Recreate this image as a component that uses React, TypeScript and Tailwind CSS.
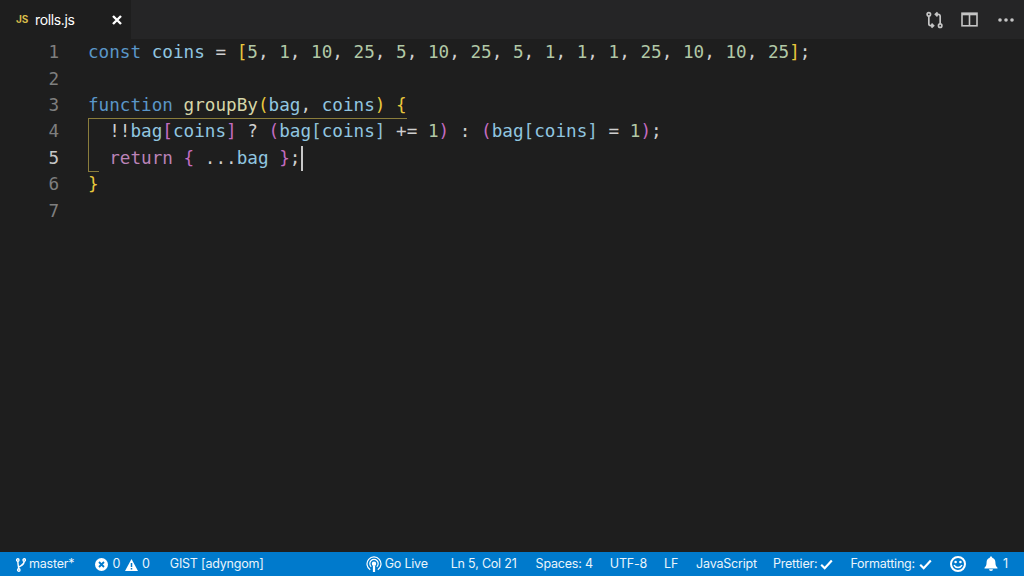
import React from "react";

const B = "text-[#91c6e0]";
const K = "text-[#5a96c8]";
const N = "text-[#b1c8a6]";
const Y = "text-[#e8c83c]";
const P = "text-[#c46cc0]";
const C = "text-[#bb83b8]";
const F = "text-[#d6d6a8]";
const D = "text-[#cfcfcf]";
const G = "text-[#8fc0d8]";

function S({ c, children }: { c: string; children: React.ReactNode }) {
  return <span className={c}>{children}</span>;
}

const nums = [5, 1, 10, 25, 5, 10, 25, 5, 1, 1, 1, 25, 10, 10, 25];

function Line({ n, active, children }: { n: number; active?: boolean; children?: React.ReactNode }) {
  return (
    <div className="flex h-[26.4px] leading-[26.4px]">
      <div className={`w-[59px] shrink-0 text-right ${active ? "text-[#c6c6c6]" : "text-[#7f7f7f]"}`}>{n}</div>
      <div className="ml-[29px] whitespace-pre text-[#cfcfcf]">{children}</div>
    </div>
  );
}

function Check() {
  return (
    <svg width="13" height="11" viewBox="0 0 13 11" fill="none" stroke="#fff" strokeWidth="2.2">
      <path d="M1.200 5.800 4.700 9.200 11.800 1.600" />
    </svg>
  );
}

export default function App() {
  return (
    <div className="flex h-[576px] w-[1024px] flex-col overflow-hidden bg-[#1e1e1e] font-['Liberation_Sans',sans-serif]">
      <div className="flex h-[39px] shrink-0 items-center bg-[#252526]">
        <div className="flex h-full w-[131px] items-center bg-[#1e1e1e] pl-4 font-['Inter',sans-serif]">
          <span className="w-[19px] text-[10px] font-bold text-[#d9bd4a]">JS</span>
          <span className="text-[14px] tracking-[-0.35px] text-white">rolls.js</span>
          <svg className="ml-[37px]" width="10" height="10" viewBox="0 0 10 10" stroke="#fff" strokeWidth="2.4">
            <path d="M1 1 9 9M9 1 1 9" />
          </svg>
        </div>
        <div className="ml-auto flex items-center pr-[10px]">
          <svg width="17" height="18" viewBox="0 0 18 18" fill="none" stroke="#c5c5c5" strokeWidth="1.8">
            <circle cx="3" cy="3" r="1.800" />
            <circle cx="15" cy="15" r="1.800" />
            <path d="M3 4.800V13c0 1.400.8 2 2 2h2.500M5.800 12.800 8 15l-2.200 2" />
            <path d="M15 13.200V5c0-1.400-.8-2-2-2h-2.500M12.200 5.200 10 3l2.200-2" />
          </svg>
          <svg className="ml-[18px]" width="17" height="15" viewBox="0 0 17 15" fill="none" stroke="#c5c5c5" strokeWidth="1.6">
            <rect x="1" y="1.200" width="15" height="12.600" />
            <path d="M1 2.200h15" strokeWidth="2.200" />
            <path d="M8.500 1.500v12" />
          </svg>
          <svg className="ml-[20px]" width="16" height="4" viewBox="0 0 16 4" fill="#c5c5c5">
            <circle cx="2" cy="2" r="1.800" />
            <circle cx="8" cy="2" r="1.800" />
            <circle cx="14" cy="2" r="1.800" />
          </svg>
        </div>
      </div>

      <div className="relative min-h-0 flex-1 pt-[0.3px] font-['DejaVu_Sans_Mono',monospace] text-[17.65px]">
        <Line n={1}>
          <S c={K}>const</S> <S c={B}>coins</S> = <S c={Y}>[</S>
          <S c={N}>
            {nums.map((v, i) => (
              <React.Fragment key={i}>
                {v}
                {i < nums.length - 1 ? <span className={D}>, </span> : null}
              </React.Fragment>
            ))}
          </S>
          <S c={Y}>]</S>;
        </Line>
        <Line n={2} />
        <Line n={3}>
          <S c={K}>function</S> <S c={F}>groupBy</S>
          <S c={Y}>(</S>
          <S c={B}>bag</S>, <S c={B}>coins</S>
          <S c={Y}>)</S> <S c={Y}>{"{"}</S>
        </Line>
        <Line n={4}>
          {"  !!"}
          <S c={B}>bag</S>
          <S c={P}>[</S>
          <S c={B}>coins</S>
          <S c={P}>]</S> ? <S c={P}>(</S>
          <S c={B}>bag</S>
          <S c={G}>[</S>
          <S c={B}>coins</S>
          <S c={G}>]</S> += <S c={N}>1</S>
          <S c={P}>)</S> : <S c={P}>(</S>
          <S c={B}>bag</S>
          <S c={G}>[</S>
          <S c={B}>coins</S>
          <S c={G}>]</S> = <S c={N}>1</S>
          <S c={P}>)</S>;
        </Line>
        <Line n={5} active>
          {"  "}
          <S c={C}>return</S> <S c={P}>{"{"}</S> ...<S c={B}>bag</S> <S c={P}>{"}"}</S>;
        </Line>
        <Line n={6}>
          <S c={Y}>{"}"}</S>
        </Line>
        <Line n={7} />
        <div className="absolute left-[88px] top-[79px] h-px w-[319px] bg-[#8a7d3c]" />
        <div className="absolute left-[88px] top-[79px] h-[53px] w-px bg-[#8a7d3c]" />
        <div className="absolute left-[88px] top-[132px] h-px w-[11px] bg-[#8a7d3c]" />
        <div className="absolute left-[301px] top-[107px] h-[25px] w-[2px] bg-[#c8c8c8]" />
      </div>

      <div className="flex h-[24px] shrink-0 items-center whitespace-nowrap bg-[#007acc] pt-px font-['Inter',sans-serif] text-[12.5px] tracking-[-0.2px] text-[#eaf4fb]">
        <svg className="ml-[16px]" width="10" height="14" viewBox="0 0 10 14" fill="none" stroke="#fff" strokeWidth="1.400">
          <circle cx="1.800" cy="2" r="1.200" />
          <circle cx="8.200" cy="2" r="1.200" />
          <circle cx="2.800" cy="12" r="1.200" />
          <path d="M1.800 3.200C2 7 2.400 9 2.800 10.800M8.200 3.200C8.200 7 5 7.500 3.200 9" />
        </svg>
        <span className="ml-[3px]">master*</span>
        <svg className="ml-[21px]" width="13" height="13" viewBox="0 0 13 13">
          <circle cx="6.500" cy="6.500" r="6.500" fill="#fff" />
          <path d="M4 4 9 9M9 4 4 9" stroke="#007acc" strokeWidth="1.800" />
        </svg>
        <span className="ml-[4px]">0</span>
        <svg className="ml-[5px]" width="13" height="12" viewBox="0 0 13 12">
          <path d="M6.500 0 13 12H0Z" fill="#fff" />
          <path d="M6.500 4v4M6.500 9v1.500" stroke="#007acc" strokeWidth="1.500" />
        </svg>
        <span className="ml-[4px]">0</span>
        <span className="ml-[20px]">GIST [adyngom]</span>
        <svg className="ml-[102px]" width="16" height="17" viewBox="0 0 16 17" fill="none" stroke="#fff" strokeWidth="1.200">
          <path d="M4.200 13.800a7 7 0 1 1 7.600 0" />
          <path d="M5.200 10.800a4.200 4.200 0 1 1 5.600 0" />
          <circle cx="8" cy="7.700" r="1.600" fill="#fff" />
          <path d="M8 10v6" strokeWidth="2.200" />
        </svg>
        <span className="ml-[3px]">Go Live</span>
        <span className="ml-[23px]">Ln 5, Col 21</span>
        <span className="ml-[19px]">Spaces: 4</span>
        <span className="ml-[17px]">UTF-8</span>
        <span className="ml-[17px]">LF</span>
        <span className="ml-[18px]">JavaScript</span>
        <span className="ml-[16px]">Prettier:</span>
        <span className="ml-[3px]"><Check /></span>
        <span className="ml-[17px]">Formatting:</span>
        <span className="ml-[4px]"><Check /></span>
        <svg className="ml-[18px] -translate-y-px" width="16" height="16" viewBox="0 0 16 16">
          <circle cx="8" cy="8" r="7" fill="none" stroke="#fff" strokeWidth="2" />
          <circle cx="5.600" cy="6" r="1.300" fill="#fff" />
          <circle cx="10.400" cy="6" r="1.300" fill="#fff" />
          <path d="M4 9.200c1.800 3.200 6.200 3.200 8 0" fill="none" stroke="#fff" strokeWidth="1.500" />
        </svg>
        <svg className="ml-[18px] -translate-y-px" width="14" height="15" viewBox="0 0 14 15" fill="#fff">
          <path d="M7 .5c-.8 0-1.200.5-1.200 1.200C3.600 2.300 2.600 4 2.600 6.200c0 3-.8 4.200-2.100 5.500v.8h13v-.8c-1.300-1.300-2.100-2.500-2.100-5.500 0-2.200-1-3.900-3.200-4.500C8.200 1 7.800.5 7 .5Z" />
          <path d="M5 13.200a2 1.700 0 0 0 4 0Z" />
        </svg>
        <span className="ml-[5px]">1</span>
      </div>
    </div>
  );
}
